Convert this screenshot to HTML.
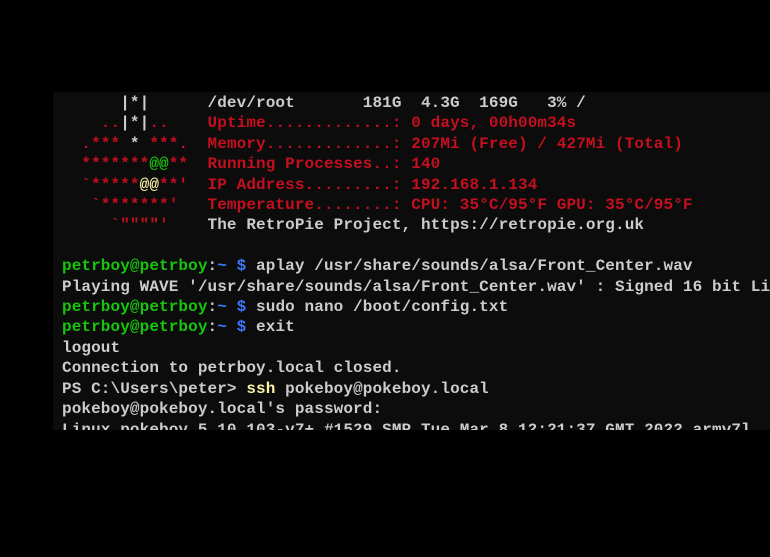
<!DOCTYPE html>
<html><head><style>
html,body{margin:0;padding:0;background:#000;width:770px;height:557px;overflow:hidden}
#t{position:absolute;left:53px;top:92px;width:717px;height:338px;background:#0c0c0c;overflow:hidden}
pre{margin:0;position:absolute;left:9px;top:1px;font-family:"Liberation Mono",monospace;font-size:16px;line-height:20.4px;color:#cccccc;font-weight:bold;letter-spacing:0.1px}
.r{color:#c50f1f}.g{color:#16c60c}.b{color:#3b78ff}.y{color:#f9f1a5}
</style></head><body><div id="t"><pre>      |*|      /dev/root       181G  4.3G  169G   3% /
<span class="r">    ..</span>|*|<span class="r">..    Uptime.............: 0 days, 00h00m34s</span>
<span class="r">  .***</span> * <span class="r">***.  Memory.............: 207Mi (Free) / 427Mi (Total)</span>
<span class="r">  *******</span><span class="g">@@</span><span class="r">**  Running Processes..: 140</span>
<span class="r">  `*****</span><span class="y">@@</span><span class="r">**'  IP Address.........: 192.168.1.134</span>
<span class="r">   `*******'   Temperature........: CPU: 35°C/95°F GPU: 35°C/95°F</span>
<span class="r">     `""""'</span>    The RetroPie Project, https://retropie.org.uk

<span class="g">petrboy@petrboy</span>:<span class="b">~ $</span> aplay /usr/share/sounds/alsa/Front_Center.wav
Playing WAVE '/usr/share/sounds/alsa/Front_Center.wav' : Signed 16 bit Little
<span class="g">petrboy@petrboy</span>:<span class="b">~ $</span> sudo nano /boot/config.txt
<span class="g">petrboy@petrboy</span>:<span class="b">~ $</span> exit
logout
Connection to petrboy.local closed.
PS C:\Users\peter&gt; <span class="y">ssh</span> pokeboy@pokeboy.local
pokeboy@pokeboy.local's password:
Linux pokeboy 5.10.103-v7+ #1529 SMP Tue Mar 8 12:21:37 GMT 2022 armv7l</pre></div></body></html>
